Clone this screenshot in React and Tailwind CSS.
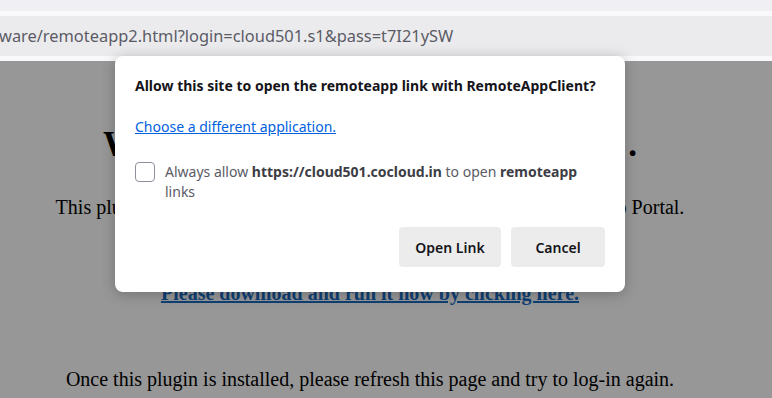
import React from 'react';

const ui = { fontFamily: '"Noto Sans", "Open Sans", sans-serif' };
const serif = { fontFamily: '"Liberation Serif", "Times New Roman", serif' };

function BrowserBar() {
  return (
    <div className="bg-[#f0f0f4]">
      <div className="h-[11px]" />
      <div className="bg-[#f9f9fb] pt-[5px] pb-[5px]">
        <div
          className="h-[40px] bg-[#ebebed] flex items-center text-[16.4px] text-[#5b5b66] overflow-hidden whitespace-nowrap"
          style={ui}
        >
          <span className="-ml-[1px]">ware/remoteapp2.html?login=cloud501.s1&amp;pass=t7I21ySW</span>
        </div>
      </div>
    </div>
  );
}

function PageBehind() {
  return (
    <div className="bg-[#979797] h-[337px] pr-[32px] text-black flex flex-col items-center text-center" style={serif}>
      <h1 className="mt-[62px] text-[35px] font-bold leading-[44px]">
        Welcome to the RemoteApp Portal<span className="ml-[6px]">.</span>
      </h1>
      <p className="mt-[28px] text-[20px] leading-[24px]">
        This plugin is required to run remote applications from the RemoteApp Portal.
      </p>
      <a className="mt-[62px] text-[20px] leading-[24px] font-bold underline text-[#0f3f74]">
        Please download and run it now by clicking here.
      </a>
      <p className="mt-[62px] text-[20px] leading-[24px]">
        Once this plugin is installed, please refresh this page and try to log-in again.
      </p>
    </div>
  );
}

function Dialog() {
  return (
    <div
      className="absolute left-[115px] top-[56px] w-[510px] bg-white rounded-[8px] shadow-[0_2px_14px_rgba(0,0,0,0.25)] px-5 pt-[20px] pb-[25px]"
      style={ui}
    >
      <h2 className="text-[14px] font-bold leading-[20px] text-[#15141a]">
        Allow this site to open the remoteapp link with RemoteAppClient?
      </h2>
      <a className="block mt-[21px] text-[14px] leading-[20px] text-[#0061e0] underline">
        Choose a different application.
      </a>
      <label className="mt-[25px] flex items-start gap-[10px]">
        <span className="w-[20px] h-[20px] shrink-0 rounded-[4px] border border-[#8f8f9d] bg-white" />
        <span className="text-[14px] leading-[20px] text-[#5b5b66] pr-[18px]">
          Always allow <b className="text-[#3d3d45]">https://cloud501.cocloud.in</b> to open{' '}
          <b className="text-[#3d3d45]">remoteapp</b> links
        </span>
      </label>
      <div className="mt-[25px] flex justify-end gap-[10px]">
        <button className="h-[40px] w-[102px] rounded-[4px] bg-[#ececec] text-[14px] font-semibold text-[#15141a]">
          Open Link
        </button>
        <button className="h-[40px] w-[94px] rounded-[4px] bg-[#ececec] text-[14px] font-semibold text-[#15141a]">
          Cancel
        </button>
      </div>
    </div>
  );
}

export default function App() {
  return (
    <div className="relative w-[772px] h-[398px] overflow-hidden bg-[#979797]">
      <BrowserBar />
      <PageBehind />
      <Dialog />
    </div>
  );
}
